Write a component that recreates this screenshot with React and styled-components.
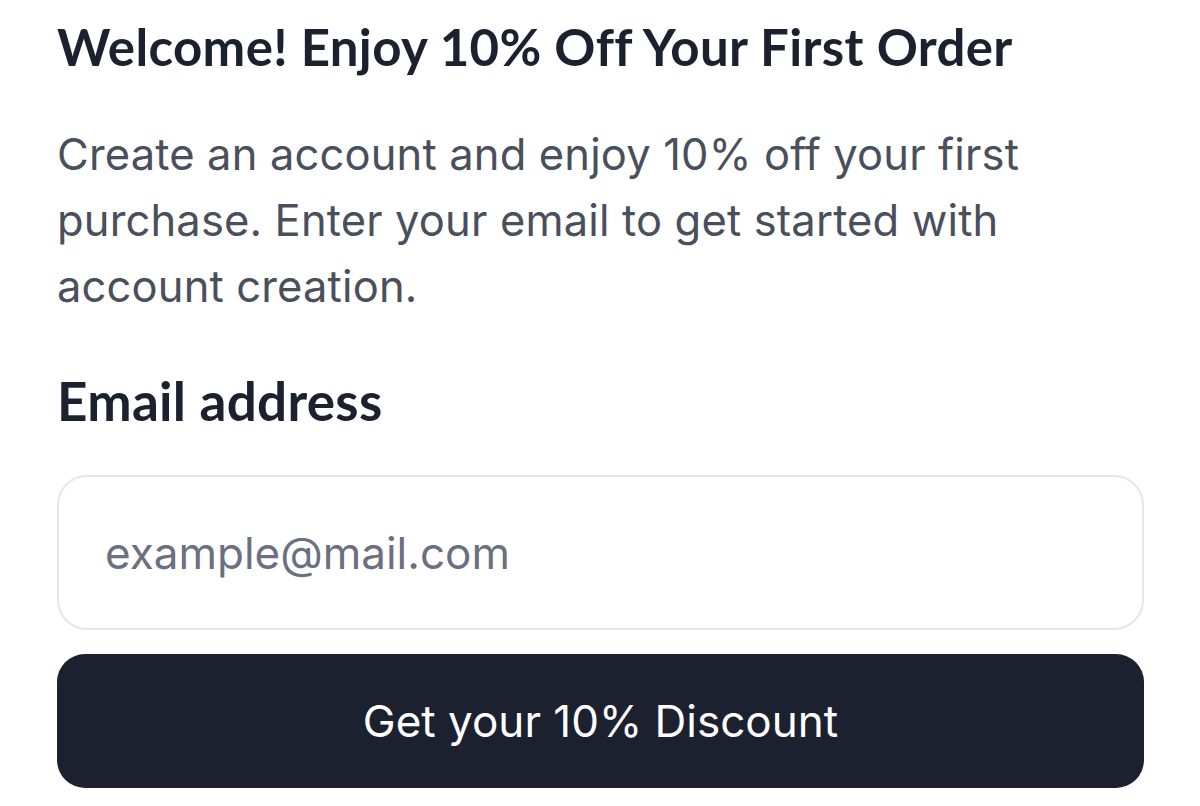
import React from "react";
import styled, { createGlobalStyle } from "styled-components";

const GlobalStyle = createGlobalStyle`
  html, body {
    margin: 0;
    padding: 0;
    background: #ffffff;
  }
  * {
    box-sizing: border-box;
  }
`;

const Page = styled.main`
  width: 1200px;
  height: 806px;
  overflow: hidden;
  padding: 17px 56px 0 57px;
  display: flex;
  flex-direction: column;
`;

const Title = styled.h1`
  margin: 0;
  font-family: Lato, "Noto Sans", sans-serif;
  font-weight: 700;
  font-size: 51px;
  line-height: 60px;
  letter-spacing: 0.35px;
  color: #1c2130;
`;

const Intro = styled.p`
  margin: 44px 0 0;
  font-family: Inter, "Noto Sans", sans-serif;
  font-weight: 400;
  font-size: 43.5px;
  line-height: 66px;
  letter-spacing: 0.15px;
  color: #4a4f5c;
  max-width: 1000px;
`;

const Label = styled.label`
  display: block;
  margin-top: 52px;
  font-family: Lato, "Noto Sans", sans-serif;
  font-weight: 700;
  font-size: 53px;
  line-height: 60px;
  letter-spacing: 0.3px;
  color: #1c2130;
`;

const Form = styled.form`
  display: flex;
  flex-direction: column;
  gap: 24px;
  margin-top: 44px;
`;

const EmailInput = styled.input`
  height: 155px;
  width: 100%;
  border: 2px solid #e6e6e8;
  border-radius: 30px;
  padding: 0 46px;
  font-family: Inter, "Noto Sans", sans-serif;
  font-size: 44px;
  color: #1c2130;
  background: #ffffff;
  outline: none;
  &::placeholder {
    color: #6b7080;
  }
`;

const SubmitButton = styled.button`
  height: 134px;
  width: 100%;
  border: none;
  border-radius: 28px;
  background: #1c2130;
  color: #ffffff;
  font-family: Inter, "Noto Sans", sans-serif;
  font-size: 44px;
  font-weight: 400;
  cursor: pointer;
`;

export default function App() {
  return (
    <>
      <GlobalStyle />
      <Page>
        <Title>Welcome! Enjoy 10% Off Your First Order</Title>
        <Intro>
          Create an account and enjoy 10% off your first purchase. Enter your
          email to get started with account creation.
        </Intro>
        <Label htmlFor="email">Email address</Label>
        <Form onSubmit={(e) => e.preventDefault()}>
          <EmailInput id="email" type="email" placeholder="example@mail.com" />
          <SubmitButton type="submit">Get your 10% Discount</SubmitButton>
        </Form>
      </Page>
    </>
  );
}
